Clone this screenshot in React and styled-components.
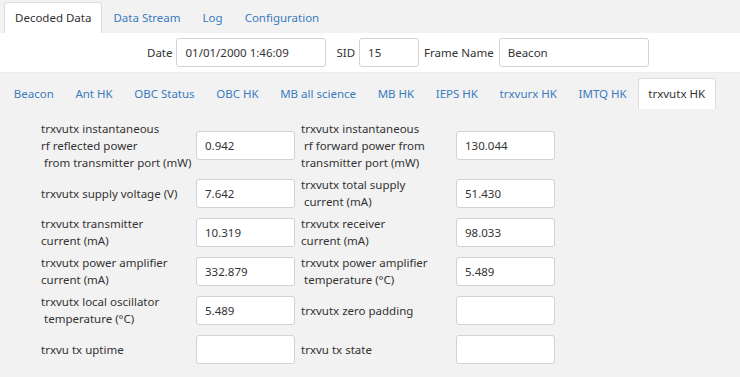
import styled, { createGlobalStyle } from "styled-components";

const Global = createGlobalStyle`
	body {
		margin: 0;
		background: #f2f2f2;
		font-family: "Noto Sans", "Open Sans", sans-serif;
		font-size: 11.5px;
		color: #333;
	}
`;

const TabBar = styled.div`
	display: flex;
	align-items: flex-end;
	height: 33px;
	padding: 0 0 0 4px;
	background: #f2f2f2;
	box-sizing: border-box;
`;

const SubTabBar = styled(TabBar)`
	height: 36px;
	padding-left: 3px;
`;

const Tab = styled.div`
	height: 31px;
	line-height: 30px;
	padding: 0 ${(p) => p.$pad}px;
	box-sizing: border-box;
	color: ${(p) => (p.$active ? "#333" : "#3a7bbf")};
	background: ${(p) => (p.$active ? "#fff" : "transparent")};
	border: 1px solid ${(p) => (p.$active ? "#ddd" : "transparent")};
	border-bottom: none;
	border-radius: 4px 4px 0 0;
	white-space: nowrap;
	cursor: pointer;
`;

const Header = styled.div`
	display: flex;
	align-items: center;
	height: 40px;
	padding-left: 147px;
	background: #fff;
	border-bottom: 1px solid #ececec;
	box-sizing: border-box;
`;

const HeadLabel = styled.span`
	margin: 0 ${(p) => p.$gap}px 0 ${(p) => p.$lead}px;
`;

const Input = styled.input`
	width: ${(p) => p.$w}px;
	height: 29px;
	box-sizing: border-box;
	border: 1px solid #d2d2d2;
	border-radius: 3px;
	background: #fff;
	padding: 0 8px;
	font-family: inherit;
	font-size: 11.5px;
	color: #333;
	outline: none;
`;

const Content = styled.div`
	display: flex;
	flex-direction: column;
	gap: 5px;
	padding: 11px 0 0 41px;
`;

const Row = styled.div`
	display: flex;
	align-items: center;
	min-height: 34px;
`;

const FieldLabel = styled.div`
	width: 155px;
	line-height: 17px;
	white-space: pre;
	color: #333;
`;

const Gap = styled.div`
	width: 6px;
`;

const topTabs = ["Decoded Data", "Data Stream", "Log", "Configuration"];
const subTabs = [
	"Beacon",
	"Ant HK",
	"OBC Status",
	"OBC HK",
	"MB all science",
	"MB HK",
	"IEPS HK",
	"trxvurx HK",
	"IMTQ HK",
	"trxvutx HK",
];

const rows = [
	[
		["trxvutx instantaneous\nrf reflected power\n from transmitter port (mW)", "0.942"],
		["trxvutx instantaneous\n rf forward power from\ntransmitter port (mW)", "130.044"],
	],
	[
		["trxvutx supply voltage (V)", "7.642"],
		["trxvutx total supply\n current (mA)", "51.430"],
	],
	[
		["trxvutx transmitter\ncurrent (mA)", "10.319"],
		["trxvutx receiver\ncurrent (mA)", "98.033"],
	],
	[
		["trxvutx power amplifier\ncurrent (mA)", "332.879"],
		["trxvutx power amplifier\n temperature (°C)", "5.489"],
	],
	[
		["trxvutx local oscillator\n temperature (°C)", "5.489"],
		["trxvutx zero padding", ""],
	],
	[
		["trxvu tx uptime", ""],
		["trxvu tx state", ""],
	],
];

const App = () => {
	return (
		<>
			<Global />
			<TabBar>
				{topTabs.map((t) => (
					<Tab key={t} $pad={10} $active={t === "Decoded Data"}>
						{t}
					</Tab>
				))}
			</TabBar>
			<Header>
				<HeadLabel $lead={0} $gap={4}>Date</HeadLabel>
				<Input $w={150} defaultValue="01/01/2000 1:46:09" />
				<HeadLabel $lead={10} $gap={4}>SID</HeadLabel>
				<Input $w={60} defaultValue="15" />
				<HeadLabel $lead={5} $gap={5}>Frame Name</HeadLabel>
				<Input $w={150} defaultValue="Beacon" />
			</Header>
			<SubTabBar>
				{subTabs.map((t) => (
					<Tab key={t} $pad={9.8} $active={t === "trxvutx HK"}>
						{t}
					</Tab>
				))}
			</SubTabBar>
			<Content>
				{rows.map((r, i) => (
					<Row key={i}>
						{r.map(([label, value], j) => (
							<>
								<FieldLabel key={"l" + j}>{label}</FieldLabel>
								<Input key={"i" + j} $w={99} defaultValue={value} />
								<Gap key={"g" + j} />
							</>
						))}
					</Row>
				))}
			</Content>
		</>
	);
};

export default App;
